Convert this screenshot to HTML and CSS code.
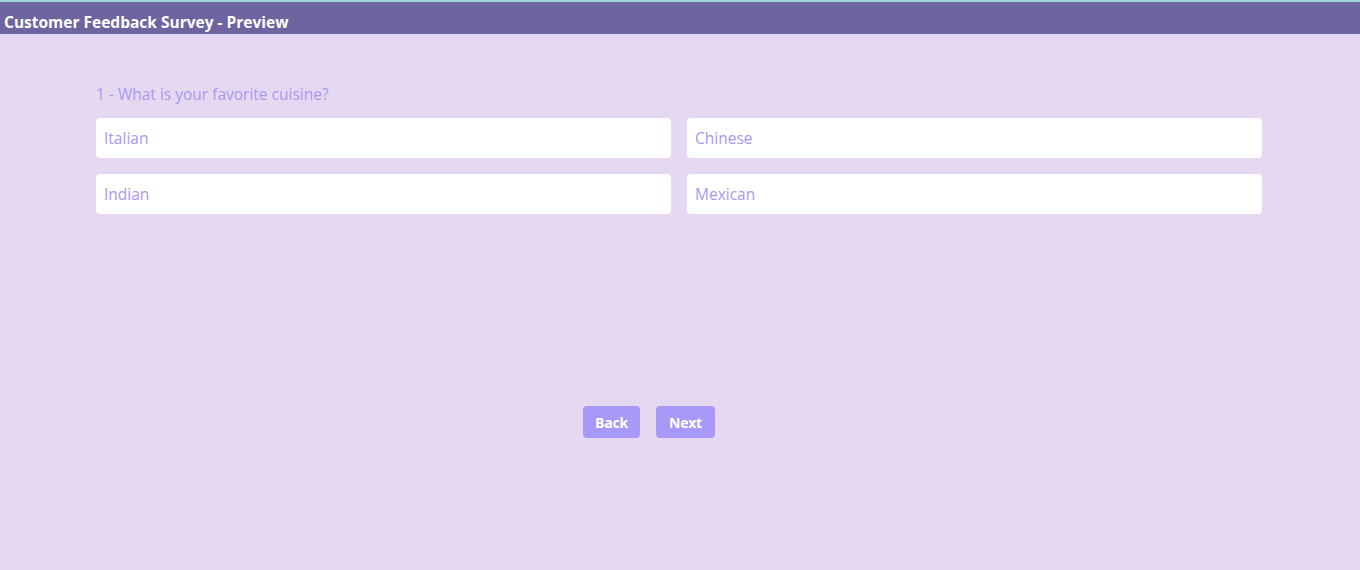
FILE: index.html
```html
<!DOCTYPE html>
<html>
<head>
<meta charset="utf-8">
<link rel="stylesheet" href="styles.css">
</head>
<body>
<header class="topbar">Customer Feedback Survey - Preview</header>
<main class="survey">
  <div class="question">
    <p class="q-title">1 - What is your favorite cuisine?</p>
    <div class="options">
      <div class="option">Italian</div>
      <div class="option">Chinese</div>
      <div class="option">Indian</div>
      <div class="option">Mexican</div>
    </div>
  </div>
  <div class="nav">
    <button class="btn">Back</button>
    <button class="btn btn-next">Next</button>
  </div>
</main>
</body>
</html>
```
FILE: styles.css
```css
html, body {
  margin: 0;
  padding: 0;
  height: 100%;
}
body {
  background: #e5d8f0;
  font-family: "Open Sans", "Noto Sans", sans-serif;
}
.topbar {
  border-top: 2px solid #9fd3dc;
  background: #6e64a0;
  color: #ffffff;
  font-weight: 700;
  font-size: 15.5px;
  line-height: 40px;
  padding-left: 4px;
  box-sizing: border-box;
  height: 34px;
  overflow: hidden;
}
.survey {
  padding: 0 98px 0 96px;
}
.question {
  padding-top: 50px;
}
.q-title {
  margin: 0 0 14px;
  color: #a898f0;
  font-size: 15.5px;
  line-height: 20px;
}
.options {
  display: grid;
  grid-template-columns: 1fr 1fr;
  gap: 16px;
}
.option {
  background: #ffffff;
  border-radius: 4px;
  height: 40px;
  line-height: 40px;
  padding-left: 8px;
  color: #a898f0;
  font-size: 15.5px;
}
.nav {
  display: flex;
  gap: 16px;
  padding-left: 487px;
  margin-top: 192px;
}
.btn {
  background: #a898f8;
  color: #ffffff;
  border: none;
  border-radius: 4px;
  height: 32px;
  padding: 0 12px;
  font-family: inherit;
  font-weight: 700;
  font-size: 14px;
  letter-spacing: -0.2px;
}
.btn-next {
  padding: 0 13px;
}
```
